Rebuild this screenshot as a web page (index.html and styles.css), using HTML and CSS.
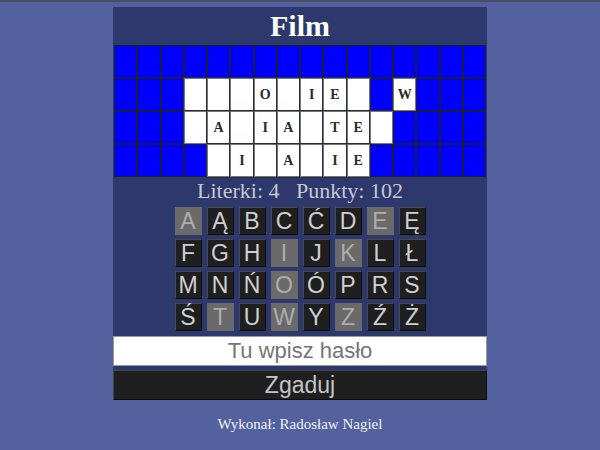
FILE: index.html
```html
<!DOCTYPE html>
<html lang="pl">
<head>
<meta charset="utf-8">
<title>Koło fortuny</title>
<link rel="stylesheet" href="styles.css">
</head>
<body>
<div class="topline"></div>
<main class="game">
  <h1 class="title">Film</h1>
  <div class="board">
    <div class="cell"></div><div class="cell"></div><div class="cell"></div><div class="cell"></div><div class="cell"></div><div class="cell"></div><div class="cell"></div><div class="cell"></div><div class="cell"></div><div class="cell"></div><div class="cell"></div><div class="cell"></div><div class="cell"></div><div class="cell"></div><div class="cell"></div><div class="cell"></div>

    <div class="cell"></div><div class="cell"></div><div class="cell"></div><div class="cell open"></div><div class="cell open"></div><div class="cell open"></div><div class="cell open">O</div><div class="cell open"></div><div class="cell open">I</div><div class="cell open">E</div><div class="cell open"></div><div class="cell"></div><div class="cell open">W</div><div class="cell"></div><div class="cell"></div><div class="cell"></div>

    <div class="cell"></div><div class="cell"></div><div class="cell"></div><div class="cell open"></div><div class="cell open">A</div><div class="cell open"></div><div class="cell open">I</div><div class="cell open">A</div><div class="cell open"></div><div class="cell open">T</div><div class="cell open">E</div><div class="cell open"></div><div class="cell"></div><div class="cell"></div><div class="cell"></div><div class="cell"></div>

    <div class="cell"></div><div class="cell"></div><div class="cell"></div><div class="cell"></div><div class="cell open"></div><div class="cell open">I</div><div class="cell open"></div><div class="cell open">A</div><div class="cell open"></div><div class="cell open">I</div><div class="cell open">E</div><div class="cell"></div><div class="cell"></div><div class="cell"></div><div class="cell"></div><div class="cell"></div>
  </div>
  <div class="stats">Literki: 4&nbsp;&nbsp; Punkty: 102</div>
  <div class="letters">
    <button class="key used">A</button><button class="key">Ą</button><button class="key">B</button><button class="key">C</button><button class="key">Ć</button><button class="key">D</button><button class="key used">E</button><button class="key">Ę</button>
    <button class="key">F</button><button class="key">G</button><button class="key">H</button><button class="key used">I</button><button class="key">J</button><button class="key used">K</button><button class="key">L</button><button class="key">Ł</button>
    <button class="key">M</button><button class="key">N</button><button class="key">Ń</button><button class="key used">O</button><button class="key">Ó</button><button class="key">P</button><button class="key">R</button><button class="key">S</button>
    <button class="key">Ś</button><button class="key used">T</button><button class="key">U</button><button class="key used">W</button><button class="key">Y</button><button class="key used">Z</button><button class="key">Ź</button><button class="key">Ż</button>
  </div>
  <input class="guess-input" type="text" placeholder="Tu wpisz hasło">
  <button class="guess-btn">Zgaduj</button>
</main>
<p class="footer">Wykonał: Radosław Nagiel</p>
</body>
</html>
```
FILE: styles.css
```css
html, body {
  margin: 0;
  padding: 0;
}
body {
  background: #53629e;
  font-family: "Liberation Serif", "Times New Roman", serif;
  height: 450px;
  overflow: hidden;
}
.topline {
  height: 2px;
  background: #4b4e62;
}
.game {
  width: 374px;
  margin: 5px auto 0;
  background: #2d386c;
  display: flex;
  flex-direction: column;
  align-items: center;
}
.title {
  margin: 0;
  height: 38px;
  line-height: 38px;
  font-size: 30px;
  font-weight: bold;
  color: #ffffff;
}
.board {
  width: 372px;
  display: grid;
  grid-template-columns: repeat(16, 1fr);
  grid-auto-rows: 33px;
}
.cell {
  background: #0000ff;
  border: 1px solid #1c1f33;
  display: flex;
  align-items: center;
  justify-content: center;
  font-size: 14px;
  font-weight: bold;
  color: #2a2a2a;
}
.cell.open {
  background: #ffffff;
  border-color: #777777;
  box-shadow: 0 0 0 1px #2a2d3e;
}
.stats {
  height: 28px;
  line-height: 28px;
  font-size: 22px;
  color: #c8c8d0;
}
.letters {
  margin-top: 2px;
  display: grid;
  grid-template-columns: repeat(8, 27px);
  grid-auto-rows: 28px;
  column-gap: 5px;
  row-gap: 4px;
}
.key {
  padding: 0;
  margin: 0;
  background: #1f1f1f;
  border: 1px solid;
  border-color: #4a4a4a #0d0d0d #0d0d0d #4a4a4a;
  color: #cfcfcf;
  font-family: "Liberation Sans", Arial, sans-serif;
  font-size: 23px;
  line-height: 26px;
}
.key.used {
  background: #6a6a6a;
  border-color: #6a6a6a;
  color: #adadad;
}
.guess-input {
  box-sizing: border-box;
  margin: 5px 0 0;
  width: 374px;
  height: 30px;
  border: 1px solid #999999;
  background: #ffffff;
  font-family: "Liberation Sans", Arial, sans-serif;
  font-size: 22px;
  text-align: center;
  padding: 0;
}
.guess-input::placeholder {
  color: #757575;
}
.guess-btn {
  box-sizing: border-box;
  margin: 4px 0 0;
  width: 374px;
  height: 30px;
  background: #1f1f1f;
  border: 1px solid;
  border-color: #444444 #0d0d0d #0d0d0d #444444;
  color: #c4c4c4;
  font-family: "Liberation Sans", Arial, sans-serif;
  font-size: 23px;
  line-height: 28px;
  padding: 0;
}
.footer {
  margin: 15px 0 0;
  text-align: center;
  font-size: 15px;
  line-height: 18px;
  color: #f0f0f0;
}
```
